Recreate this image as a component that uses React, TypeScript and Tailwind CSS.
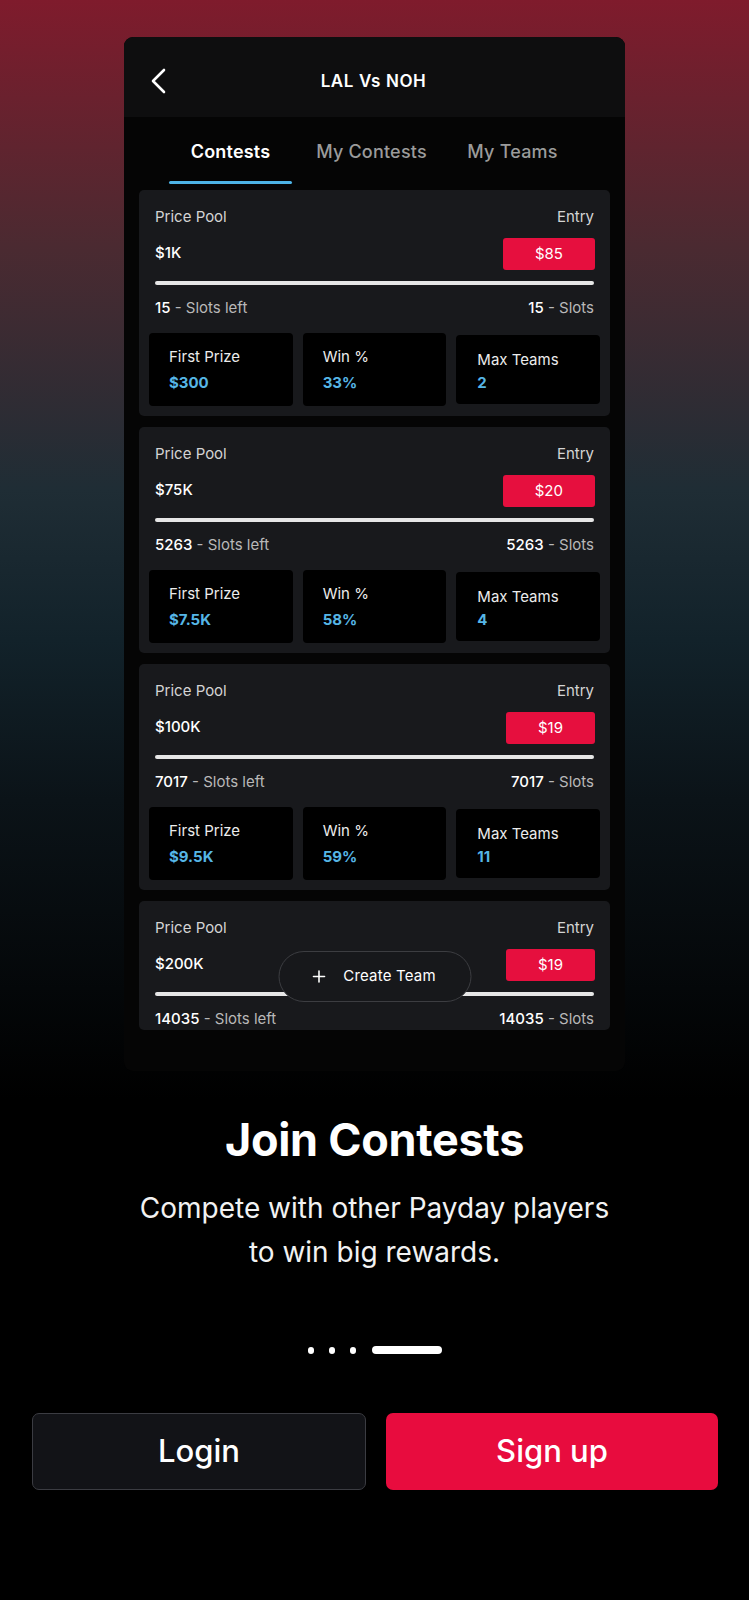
import { Plus } from "lucide-react";

type Contest = {
  pool: string;
  entry: string;
  slots: number;
  firstPrize?: string;
  win?: string;
  maxTeams?: number;
};

const contests: Contest[] = [
  { pool: "$1K", entry: "$85", slots: 15, firstPrize: "$300", win: "33%", maxTeams: 2 },
  { pool: "$75K", entry: "$20", slots: 5263, firstPrize: "$7.5K", win: "58%", maxTeams: 4 },
  { pool: "$100K", entry: "$19", slots: 7017, firstPrize: "$9.5K", win: "59%", maxTeams: 11 },
  { pool: "$200K", entry: "$19", slots: 14035 },
];

const App = () => {
  return (
    <div className="min-h-[1600px] w-full bg-[linear-gradient(180deg,#7f1b2c_0px,#4b2a31_245px,#1f2d35_490px,#12222a_640px,#0b1318_800px,#000_1100px)] pt-[37px] font-['Inter','Noto_Sans',sans-serif] text-white">
      <PhoneFrame />

      <div className="mt-[45px] flex flex-col items-center text-center">
        <h1 className="text-[45px] leading-[48px] font-bold tracking-[-0.3px]">Join Contests</h1>
        <p className="mt-[22px] text-[28px] leading-[44px] text-[#f2f2f2]">
          Compete with other Payday players
          <br />
          to win big rewards.
        </p>
      </div>

      <div className="mt-[72px] flex items-center justify-center gap-[15px]">
        <span className="h-[7px] w-[6px] rounded-full bg-white" />
        <span className="h-[7px] w-[6px] rounded-full bg-white" />
        <span className="h-[7px] w-[6px] rounded-full bg-white" />
        <span className="ml-[1px] h-[8px] w-[70px] rounded-full bg-white" />
      </div>

      <div className="mt-[59px] flex gap-[20px] pr-[31px] pl-[32px]">
        <button className="flex h-[77px] flex-1 items-center justify-center rounded-[7px] border border-[#3b3c42] bg-[#121317] text-[31px] font-medium">
          Login
        </button>
        <button className="flex h-[77px] flex-1 items-center justify-center rounded-[7px] bg-[#e80c3e] text-[31px] font-medium">
          Sign up
        </button>
      </div>
    </div>
  );
};

const PhoneFrame = () => {
  return (
    <div className="relative mx-auto w-[501px] overflow-hidden rounded-[9px] bg-[#050505]">
      <div className="flex h-[80px] items-start bg-[#0e0e0f] pr-[28px] pl-[26px] pt-[32px]">
        <svg width="18" height="26" viewBox="0 0 18 26" className="mt-[-1px]">
          <polyline points="14,2 3,13 14,24" fill="none" stroke="white" strokeWidth="2.6" strokeLinecap="round" strokeLinejoin="round" />
        </svg>
        <p className="flex-1 pr-[18px] text-center text-[17px] leading-[24px] font-semibold tracking-[0.6px]">LAL Vs NOH</p>
      </div>

      <div className="flex justify-center gap-[18px] pr-[6px]">
        <Tab label="Contests" active />
        <Tab label="My Contests" />
        <Tab label="My Teams" />
      </div>

      <div className="mt-[6px] flex h-[840px] flex-col gap-[11px] overflow-hidden px-[15px]">
        {contests.map((c, i) => (
          <ContestCard key={i} contest={c} />
        ))}
      </div>

      <div className="h-[41px]" />

      <button className="absolute bottom-[69px] left-1/2 flex h-[51px] w-[193px] -translate-x-1/2 items-center justify-center gap-[15px] rounded-full border border-[#3c3d41] bg-[#17181b] pr-[4px] text-[15px] tracking-[0.2px]">
        <Plus size={19} strokeWidth={2} />
        <span>Create Team</span>
      </button>
    </div>
  );
};

const Tab = ({ label, active }: { label: string; active?: boolean }) => {
  return (
    <div className="flex w-[123px] flex-col items-center pt-[23px]">
      <p className={`text-[18px] leading-[24px] tracking-[0.2px] ${active ? "font-semibold text-white" : "font-medium text-[#9b9b9b]"}`}>
        {label}
      </p>
      <div className={`mt-[17px] h-[3px] w-full rounded-full ${active ? "bg-[#4db3e6]" : "bg-transparent"}`} />
    </div>
  );
};

const ContestCard = ({ contest }: { contest: Contest }) => {
  const hasStats = contest.firstPrize !== undefined;
  return (
    <div className={`shrink-0 rounded-[5px] bg-[#18191c] pt-[16px] ${hasStats ? "pb-[10px]" : "pb-0"}`}>
      <div className="flex justify-between px-[16px] text-[15px] leading-[22px] text-[#d4d4d4]">
        <p>Price Pool</p>
        <p>Entry</p>
      </div>
      <div className="mt-[10px] flex h-[32px] items-center justify-between pr-[15px] pl-[16px]">
        <p className="mt-[-2px] text-[15px] font-medium">{contest.pool}</p>
        <div className="flex h-[32px] items-center rounded-[3px] bg-[#e60f3e] px-[32px] text-[15px]">
          {contest.entry}
        </div>
      </div>
      <div className="mx-[16px] mt-[11px] h-[4px] rounded-full bg-[#e6e6e6]" />
      <div className="mt-[12px] flex justify-between px-[16px] text-[15px] leading-[22px]">
        <p>
          <span className="font-medium">{contest.slots}</span>
          <span className="text-[#b8b8b8]"> - Slots left</span>
        </p>
        <p>
          <span className="font-medium">{contest.slots}</span>
          <span className="text-[#b8b8b8]"> - Slots</span>
        </p>
      </div>
      {hasStats && (
        <div className="mt-[14px] grid grid-cols-3 gap-[10px] px-[10px]">
          <Stat label="First Prize" value={contest.firstPrize ?? ""} />
          <Stat label="Win %" value={contest.win ?? ""} />
          <Stat label="Max Teams" value={String(contest.maxTeams)} tight />
        </div>
      )}
    </div>
  );
};

const Stat = ({ label, value, tight }: { label: string; value: string; tight?: boolean }) => {
  return (
    <div
      className={`flex flex-col rounded-[4px] bg-black ${
        tight ? "mt-[2px] h-[69px] pt-[15px] pl-[21px]" : "h-[73px] pt-[14px] pl-[20px]"
      }`}
    >
      <p className="text-[15px] leading-[20px] text-[#ececec]">{label}</p>
      <p className={`text-[15px] leading-[20px] font-bold text-[#56b6e6] ${tight ? "mt-[3px]" : "mt-[6px]"}`}>{value}</p>
    </div>
  );
};

export default App;
